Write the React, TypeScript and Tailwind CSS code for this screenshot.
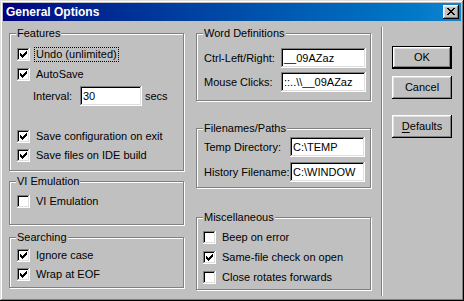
import React from "react";

const sunken =
  "bg-white shadow-[inset_-1px_-1px_#ffffff,inset_1px_1px_#808080,inset_-2px_-2px_#dfdfdf,inset_2px_2px_#000000]";
const raised =
  "bg-[#c0c0c0] shadow-[inset_-1px_-1px_#000000,inset_1px_1px_#ffffff,inset_-2px_-2px_#808080,inset_2px_2px_#dfdfdf]";

function Check({ checked }: { checked: boolean }) {
  return (
    <span className={`w-[13px] h-[13px] shrink-0 flex items-start justify-start ${sunken}`}>
      {checked && (
        <svg width="7" height="7" viewBox="0 0 7 7" className="ml-[3px] mt-[3px]" shapeRendering="crispEdges">
          <path
            fill="#000"
            d="M6 0h1v1h-1z M5 1h2v1h-2z M0 2h1v1h-1z M4 2h3v1h-3z M0 3h2v1h-2z M3 3h3v1h-3z M0 4h5v1h-5z M1 5h3v1h-3z M2 6h1v1h-1z"
          />
        </svg>
      )}
    </span>
  );
}

function CheckRow({
  checked,
  label,
  className = "",
  focus = false,
}: {
  checked: boolean;
  label: string;
  className?: string;
  focus?: boolean;
}) {
  return (
    <div className={`flex items-center h-[13px] ${className}`}>
      <Check checked={checked} />
      {focus ? (
        <span className="ml-[4px] px-[1px] border border-dotted border-black leading-[13px] whitespace-nowrap">
          {label}
        </span>
      ) : (
        <span className="ml-[6px] leading-[13px] whitespace-nowrap">{label}</span>
      )}
    </div>
  );
}

function Group({
  label,
  className = "",
  children,
}: {
  label: string;
  className?: string;
  children: React.ReactNode;
}) {
  return (
    <div
      className={`relative border border-[#808080] shadow-[1px_1px_0_#ffffff,inset_1px_1px_0_#ffffff] flex flex-col ${className}`}
    >
      <span className="absolute -top-[7px] left-[6px] px-[1px] bg-[#c0c0c0] leading-[13px] whitespace-nowrap">
        {label}
      </span>
      {children}
    </div>
  );
}

function Field({ value, className = "" }: { value: string; className?: string }) {
  return (
    <div className={`h-[20px] flex items-center pl-[3px] pr-[2px] overflow-hidden whitespace-nowrap ${sunken} ${className}`}>
      <span className="leading-[13px]">{value}</span>
    </div>
  );
}

function Button({
  children,
  isDefault = false,
  className = "",
}: {
  children: React.ReactNode;
  isDefault?: boolean;
  className?: string;
}) {
  if (isDefault) {
    return (
      <div className={`h-[23px] w-[60px] border border-black ${className}`}>
        <div className={`w-full h-full flex items-center justify-center ${raised}`}>{children}</div>
      </div>
    );
  }
  return (
    <div className={`h-[23px] w-[60px] flex items-center justify-center ${raised} ${className}`}>{children}</div>
  );
}

export default function App() {
  return (
    <div className="w-[464px] h-[301px] bg-[#c0c0c0] p-[3px] flex flex-col text-[11px] text-black font-['Liberation_Sans',Arial,sans-serif] shadow-[inset_-1px_-1px_#000000,inset_1px_1px_#dfdfdf,inset_-2px_-2px_#808080,inset_2px_2px_#ffffff]">
      {/* Title bar */}
      <div className="h-[18px] shrink-0 flex items-center justify-between pl-[3px] pr-[2px] bg-gradient-to-r from-[#000080] to-[#1084d0]">
        <span className="text-white font-bold text-[12px] leading-[14px]">General Options</span>
        <div className={`w-[16px] h-[14px] flex items-start justify-start pl-[4px] pt-[3px] ${raised}`}>
          <svg width="8" height="7" viewBox="0 0 8 7" shapeRendering="crispEdges">
            <path
              fill="#000"
              d="M0 0h2v1h-2z M6 0h2v1h-2z M1 1h2v1h-2z M5 1h2v1h-2z M2 2h4v1h-4z M3 3h2v1h-2z M2 4h4v1h-4z M1 5h2v1h-2z M5 5h2v1h-2z M0 6h2v1h-2z M6 6h2v1h-2z"
            />
          </svg>
        </div>
      </div>

      {/* Body */}
      <div className="flex flex-1 pl-[6px]">
        {/* Left column */}
        <div className="w-[175px] mt-[12px] flex flex-col">
          <Group label="Features" className="h-[138px] pl-[7px]">
            <CheckRow checked label="Undo (unlimited)" focus className="mt-[14px]" />
            <CheckRow checked label="AutoSave" className="mt-[7px]" />
            <div className="flex items-center mt-[5px] h-[20px]">
              <span className="ml-[16px] w-[47px] leading-[13px]">Interval:</span>
              <Field value="30" className="w-[62px]" />
              <span className="ml-[3px] leading-[13px]">secs</span>
            </div>
            <CheckRow checked label="Save configuration on exit" className="mt-[24px]" />
            <CheckRow checked label="Save files on IDE build" className="mt-[6px]" />
          </Group>
          <Group label="VI Emulation" className="h-[44px] mt-[10px] pl-[7px]">
            <CheckRow checked={false} label="VI Emulation" className="mt-[13px]" />
          </Group>
          <Group label="Searching" className="h-[51px] mt-[12px] pl-[7px]">
            <CheckRow checked label="Ignore case" className="mt-[11px]" />
            <CheckRow checked label="Wrap at EOF" className="mt-[6px]" />
          </Group>
        </div>

        {/* Middle column */}
        <div className="w-[175px] ml-[12px] mt-[12px] flex flex-col">
          <Group label="Word Definitions" className="h-[68px] pl-[7px]">
            <div className="flex items-center mt-[14px]">
              <span className="w-[77px] leading-[13px] whitespace-nowrap">Ctrl-Left/Right:</span>
              <Field value="__09AZaz" className="w-[85px]" />
            </div>
            <div className="flex items-center mt-[4px]">
              <span className="w-[77px] leading-[13px] whitespace-nowrap">Mouse Clicks:</span>
              <Field value="::..\\__09AZaz" className="w-[85px]" />
            </div>
          </Group>
          <Group label="Filenames/Paths" className="h-[60px] mt-[27px] pl-[7px]">
            <div className="flex items-center mt-[8px]">
              <span className="w-[86px] leading-[13px] whitespace-nowrap">Temp Directory:</span>
              <Field value="C:\TEMP" className="w-[75px]" />
            </div>
            <div className="flex items-center mt-[5px]">
              <span className="w-[86px] leading-[13px] whitespace-nowrap">History Filename:</span>
              <Field value="C:\WINDOW" className="w-[75px]" />
            </div>
          </Group>
          <Group label="Miscellaneous" className="h-[73px] mt-[29px] pl-[6px]">
            <CheckRow checked={false} label="Beep on error" className="mt-[13px]" />
            <CheckRow checked label="Same-file check on open" className="mt-[7px]" />
            <CheckRow checked={false} label="Close rotates forwards" className="mt-[7px]" />
          </Group>
        </div>

        {/* Separator */}
        <div className="w-[2px] ml-[10px] mt-[6px] mb-[2px] border-l border-r border-l-[#808080] border-r-white" />

        {/* Buttons */}
        <div className="w-[60px] ml-[9px] mt-[25px] flex flex-col">
          <Button isDefault>OK</Button>
          <Button className="mt-[7px]">Cancel</Button>
          <Button className="mt-[16px]">
            <span>
              <span className="underline underline-offset-[2px]">D</span>efaults
            </span>
          </Button>
        </div>
      </div>
    </div>
  );
}
